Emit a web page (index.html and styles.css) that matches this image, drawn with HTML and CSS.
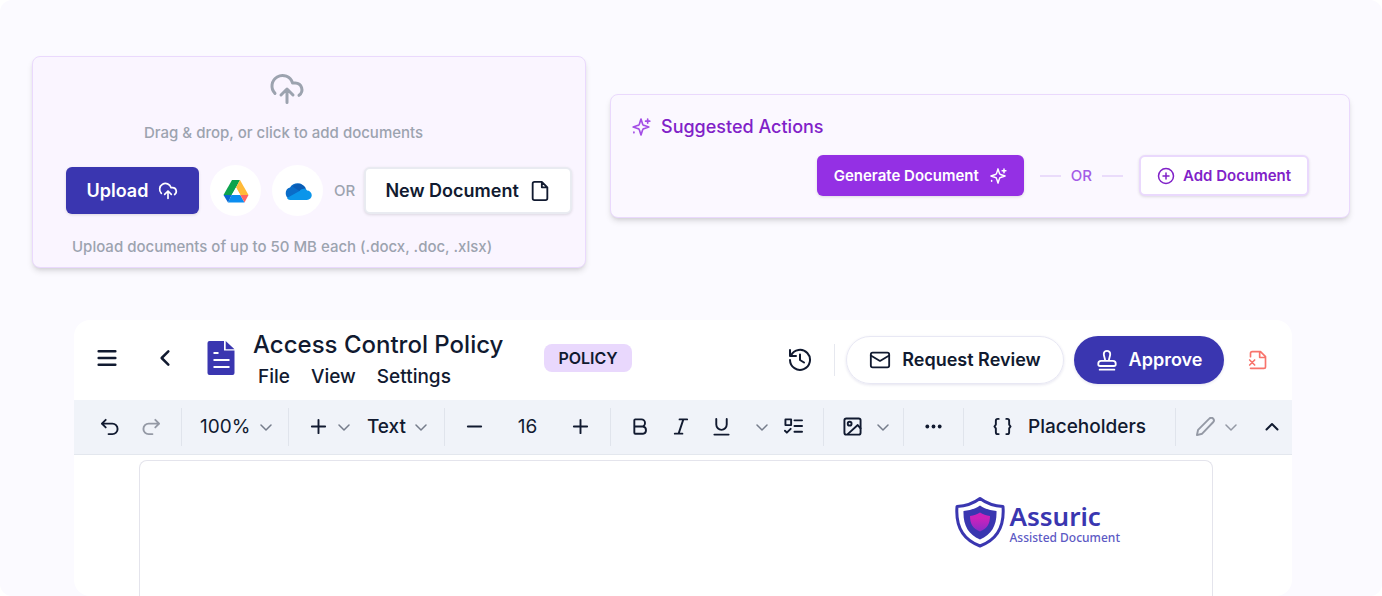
FILE: index.html
```html
<!DOCTYPE html>
<html lang="en">
<head>
  <meta charset="UTF-8" />
  <meta name="viewport" content="width=device-width, initial-scale=1.0"/>
  <title>Access Control Policy</title>
  <link rel="stylesheet" href="styles.css">
</head>
<body>
  <main class="page">
    <div class="cards">
      <section class="card upload-card">
        <svg class="icon drop-icon" viewBox="0 0 24 24"><path d="M4 14.9A7 7 0 1 1 15.7 8h1.8a4.5 4.5 0 0 1 2.5 8.2M12 12v9M8 16l4-4 4 4"/></svg>
        <p class="drop-text">Drag &amp; drop, or click to add documents</p>
        <div class="upload-row">
          <button class="btn btn-upload">Upload
            <svg class="icon" viewBox="0 0 24 24"><path d="M4 14.9A7 7 0 1 1 15.7 8h1.8a4.5 4.5 0 0 1 2.5 8.2M12 12v9M8 16l4-4 4 4"/></svg>
          </button>
          <button class="round drive" aria-label="Google Drive">
            <svg viewBox="0 0 26 24">
              <path fill="#0da34e" d="M9 1h8l-4 7.500L8.700 16H0.500z"/>
              <path fill="#ffba38" d="M17 1l8.500 15h-8.200L13 8.500z"/>
              <path fill="#fff" d="M13 8.500l-4.300 7.500h8.600z"/>
              <path fill="#0b8df0" d="M8.700 16h8.600l4.200 7.500H5z"/>
              <path fill="#0a66d0" d="M0.500 16h8.200L5 23.500z"/>
              <path fill="#ff6464" d="M17.300 16h8.200l-4 7.500z"/>
            </svg>
          </button>
          <button class="round" aria-label="OneDrive">
            <svg viewBox="0 0 28 24">
              <path fill="#0a6cc8" d="M6 20a6 6 0 0 1 0-11.500A9 9 0 0 1 21.500 9L25 18z"/>
              <path fill="#0a5cb5" d="M8.500 7.600A8 8 0 0 1 21.500 9l-6 3z"/>
              <path fill="#0a95ea" d="M3 19l12.500-7c2-2.500 6-3 7.500-.500A4.600 4.600 0 0 1 23 21H6c-1 0-2.500-1-3-2z"/>
            </svg>
          </button>
          <span class="or">OR</span>
          <button class="btn btn-new">New Document
            <svg class="icon" viewBox="0 0 24 24"><path d="M14 2H6a2 2 0 0 0-2 2v16a2 2 0 0 0 2 2h12a2 2 0 0 0 2-2V8zM14 2v6h6"/></svg>
          </button>
        </div>
        <p class="limits">Upload documents of up to 50 MB each (.docx, .doc, .xlsx)</p>
      </section>

      <section class="card actions-card">
        <h2 class="actions-title">
          <svg class="icon sparkle" viewBox="0 0 24 24"><path d="M12 2.500l1.900 6a2 2 0 0 0 1.500 1.500l6 2-6 2a2 2 0 0 0-1.500 1.500l-1.900 6-1.900-6A2 2 0 0 0 8.600 14l-6-2 6-2a2 2 0 0 0 1.500-1.500zM20 2.500v5M17.500 5h5M3.500 18v1"/></svg>
          Suggested Actions
        </h2>
        <div class="actions-row">
          <button class="btn btn-generate">Generate Document
            <svg class="icon sparkle" viewBox="0 0 24 24"><path d="M12 2.500l1.900 6a2 2 0 0 0 1.500 1.500l6 2-6 2a2 2 0 0 0-1.500 1.500l-1.900 6-1.900-6A2 2 0 0 0 8.600 14l-6-2 6-2a2 2 0 0 0 1.500-1.500zM20 2.500v5M17.500 5h5M3.500 18v1"/></svg>
          </button>
          <span class="divider-or">OR</span>
          <button class="btn btn-add">
            <svg class="icon" viewBox="0 0 24 24"><circle cx="12" cy="12" r="10"/><path d="M8 12h8M12 8v8"/></svg>
            Add Document
          </button>
        </div>
      </section>
    </div>

    <section class="editor">
      <header class="editor-header">
        <button class="tool menu" aria-label="Menu"><svg class="icon" viewBox="0 0 24 24"><path d="M2 4h20M2 12h20M2 20h20"/></svg></button>
        <button class="tool back" aria-label="Back"><svg class="icon" viewBox="0 0 24 24"><path d="M16 4l-8 8 8 8"/></svg></button>
        <svg class="doc-icon" viewBox="0 0 28 34">
          <path fill="#3a36b0" d="M2.500 0H17v9.500h10.500V32a2 2 0 0 1-2 2h-23a2 2 0 0 1-2-2V2a2 2 0 0 1 2-2zM18.700 0l8.800 8.300h-8.800z"/>
          <path stroke="#fff" stroke-width="2" d="M6.500 12h5M6.500 19h16M6.500 26h16"/>
        </svg>
        <div class="doc-info">
          <h1>Access Control Policy</h1>
          <nav class="doc-menu">
            <button>File</button>
            <button>View</button>
            <button>Settings</button>
          </nav>
        </div>
        <span class="badge">POLICY</span>
        <div class="header-actions">
          <button class="tool history" aria-label="Version history"><svg class="icon" viewBox="0 0 24 24"><path d="M3 7.500A10 10 0 1 1 2 12M2 2v6h6M12 6.500V12l4 2.500"/></svg></button>
          <span class="header-sep"></span>
          <button class="pill pill-light">
            <svg class="icon" viewBox="0 0 24 24"><rect x="2" y="4" width="20" height="16" rx="2"/><path d="M2 7l10 6 10-6"/></svg>
            Request Review
          </button>
          <button class="pill pill-dark">
            <svg class="icon" viewBox="0 0 24 24"><path d="M4 22.500h16M4.500 18.500h15a2 2 0 0 0 2-2V16a3 3 0 0 0-3-3h-13a3 3 0 0 0-3 3v.5a2 2 0 0 0 2 2zM10 13c0-3-1.500-5-1.500-7.500a3.500 3.500 0 0 1 7 0C15.500 8 14 10 14 13"/></svg>
            Approve
          </button>
          <button class="tool discard" aria-label="Discard document"><svg class="icon" viewBox="0 0 24 24"><path d="M3 8V4a2 2 0 0 1 2-2h10l6 6v12a2 2 0 0 1-2 2H3M14 2v7h7M2 12l6 6M8 12l-6 6"/></svg></button>
        </div>
      </header>

      <div class="toolbar">
        <div class="group undo-group">
          <button class="tool" aria-label="Undo"><svg class="icon" viewBox="0 0 20 20"><path d="M6 3L2 7l4 4M2 7h11a5 5 0 0 1 0 11H9"/></svg></button>
          <button class="tool muted" aria-label="Redo"><svg class="icon" viewBox="0 0 20 20"><path d="M14 3l4 4-4 4M18 7H7a5 5 0 0 0 0 11h4"/></svg></button>
        </div>
        <div class="group zoom-group">
          <button class="tool label">100%<svg class="chev" viewBox="0 0 12 12"><path d="M1 4l5 5 5-5"/></svg></button>
        </div>
        <div class="group insert-group">
          <button class="tool label" aria-label="Insert"><svg class="icon" viewBox="0 0 20 20"><path d="M3 10h14M10 3v14"/></svg><svg class="chev" viewBox="0 0 12 12"><path d="M1 4l5 5 5-5"/></svg></button>
          <button class="tool label text">Text<svg class="chev" viewBox="0 0 12 12"><path d="M1 4l5 5 5-5"/></svg></button>
        </div>
        <div class="group size-group">
          <button class="tool" aria-label="Decrease font size"><svg class="icon" viewBox="0 0 20 20"><path d="M3 10h14"/></svg></button>
          <span>16</span>
          <button class="tool" aria-label="Increase font size"><svg class="icon" viewBox="0 0 20 20"><path d="M3 10h14M10 3v14"/></svg></button>
        </div>
        <div class="group format-group">
          <button class="tool" aria-label="Bold"><svg class="icon" viewBox="0 0 20 20"><path d="M3.500 10H12M3.500 3.500a1 1 0 0 1 1-1H11a3.700 3.700 0 0 1 0 7.500h1.500a3.900 3.900 0 0 1 0 7.700h-8a1 1 0 0 1-1-1z"/></svg></button>
          <button class="tool" aria-label="Italic"><svg class="icon" viewBox="0 0 20 20"><path d="M9 2.500h8M4 17.500h8M13 2.500l-5 15"/></svg></button>
          <button class="tool" aria-label="Underline"><svg class="icon" viewBox="0 0 20 20"><path d="M4.500 2v6a5.500 5.500 0 0 0 11 0V2M2.500 18.500h15"/></svg></button>
          <button class="tool underline-more" aria-label="More formatting"><svg class="chev" viewBox="0 0 12 12"><path d="M1 4l5 5 5-5"/></svg></button>
          <button class="tool" aria-label="Checklist"><svg class="icon" viewBox="0 0 20 20"><path d="M1.500 2.500h6v6h-6zM1 14.500l2 2 4-4M11 3.500h8M11 9.500h8M11 15.500h8"/></svg></button>
        </div>
        <div class="group image-group">
          <button class="tool label" aria-label="Insert image"><svg class="icon" viewBox="0 0 20 20"><rect x="1.500" y="1.500" width="17" height="17" rx="2"/><circle cx="7" cy="7" r="2"/><path d="M18.500 12l-3-3.500L5 18"/></svg><svg class="chev" viewBox="0 0 12 12"><path d="M1 4l5 5 5-5"/></svg></button>
        </div>
        <div class="group more-group">
          <button class="tool" aria-label="More"><svg class="icon dots" viewBox="0 0 20 20"><circle cx="3.500" cy="10" r="2"/><circle cx="10" cy="10" r="2"/><circle cx="16.500" cy="10" r="2"/></svg></button>
        </div>
        <div class="group placeholder-group">
          <button class="tool placeholders"><svg class="icon" viewBox="0 0 20 20"><path d="M6 2H5a2 2 0 0 0-2 2v4l-1.500 2L3 12v4a2 2 0 0 0 2 2h1M14 2h1a2 2 0 0 1 2 2v4l1.500 2-1.500 2v4a2 2 0 0 1-2 2h-1"/></svg>Placeholders</button>
        </div>
        <div class="group edit-group">
          <button class="tool label muted" aria-label="Editing mode"><svg class="icon" viewBox="0 0 20 20"><path d="M1 19l1.200-5.500L14 1.700a2.300 2.300 0 0 1 4 3.800L6.500 17.600z"/></svg><svg class="chev" viewBox="0 0 12 12"><path d="M1 4l5 5 5-5"/></svg></button>
          <button class="tool" aria-label="Collapse toolbar"><svg class="collapse" viewBox="0 0 14 14"><path d="M1.500 9.500L7 4l5.500 5.500"/></svg></button>
        </div>
      </div>

      <div class="canvas">
        <article class="sheet">
          <div class="logo">
            <svg viewBox="0 0 52 52">
              <defs>
                <linearGradient id="core" x1="0" y1="0" x2="0" y2="1">
                  <stop offset="0.300" stop-color="#cc22bb"/>
                  <stop offset="1" stop-color="#8a2cc8"/>
                </linearGradient>
              </defs>
              <path fill="#fff" stroke="#3a36b0" stroke-width="3" stroke-linejoin="round" d="M26 2.500C20 7 12 10 3 10.500c-1.500 19 5 33 23 39.500 18-6.500 24.500-20.500 23-39.500C40 10 32 7 26 2.500z"/>
              <path fill="#3a36b0" d="M26 9.500c-4.500 3-10 5-16.500 5.500C9 29 14 38.500 26 43.500 38 38.500 43 29 42.500 15 36 14.500 30.500 12.500 26 9.500z"/>
              <path fill="url(#core)" d="M26 16.500c-3 2-6 3-10 3.500 0 8 3 12.500 10 15.500 7-3 10-7.500 10-15.500-4-.5-7-1.500-10-3.500z"/>
            </svg>
            <div class="logo-text">
              <div class="logo-name">Assuric</div>
              <div class="logo-sub">Assisted Document</div>
            </div>
          </div>
        </article>
      </div>
    </section>
  </main>
</body>
</html>
```
FILE: styles.css
```css
* {
  box-sizing: border-box;
}
body {
  font-family: Inter, sans-serif;
  background: #fff;
  color: #111a30;
  margin: 0;
}
h1, h2, p {
  margin: 0;
}
button {
  font: inherit;
  color: inherit;
  margin: 0;
  padding: 0;
  border: none;
  background: none;
  cursor: pointer;
}
svg {
  display: block;
  flex: none;
}
.icon, .chev, .collapse {
  fill: none;
  stroke: currentColor;
  stroke-width: 2;
  stroke-linecap: round;
  stroke-linejoin: round;
}
.page {
  display: flex;
  flex-direction: column;
  min-height: 100vh;
  padding: 56px 32px 0;
  background: #fbfaff;
  border-radius: 12px;
}

/* top cards */
.cards {
  display: flex;
  align-items: flex-start;
  gap: 24px;
}
.card {
  border: 1px solid #ead9fd;
  border-radius: 8px;
  background: #faf5ff;
  box-shadow: 0 4px 6px -1px rgba(0,0,0,0.13), 0 2px 4px -2px rgba(0,0,0,0.1);
}
.upload-card {
  display: flex;
  flex-direction: column;
  width: 554px;
  padding: 14px 13px 8px 33px;
  color: #9ca3af;
  font-size: 15px;
  font-weight: 500;
  line-height: 24px;
}
.drop-icon {
  width: 36px;
  height: 36px;
  margin: 0 0 14px 203px;
}
.drop-text {
  padding-left: 78px;
}
.upload-row {
  display: flex;
  align-items: center;
  gap: 11px;
  margin: 20px 0 19px;
}
.btn {
  display: flex;
  align-items: center;
  justify-content: center;
  border-radius: 6px;
  font-weight: 600;
  white-space: nowrap;
  box-shadow: 0 1px 3px rgba(0,0,0,0.12);
}
.btn-upload {
  width: 133px;
  height: 47px;
  gap: 10px;
  background: #3a36b0;
  color: #fff;
  font-size: 18px;
}
.btn-upload .icon {
  width: 20px;
  height: 20px;
}
.round {
  display: flex;
  align-items: center;
  justify-content: center;
  width: 51px;
  height: 51px;
  border-radius: 50%;
  background: #fff;
}
.round svg {
  width: 28px;
  height: 24px;
}
.or {
  margin-right: -2px;
}
.btn-new {
  flex: 1;
  height: 47px;
  gap: 10px;
  border: 2px solid #e9ebf1;
  background: #fff;
  color: #111a30;
  font-size: 18px;
}
.btn-new .icon {
  width: 22px;
  height: 22px;
}
.limits {
  padding-left: 6px;
}
.actions-card {
  flex: 1;
  margin-top: 38px;
  padding: 20px 40px 21px 20px;
  background: #fbf8ff;
  color: #8021c8;
}
.actions-title {
  display: flex;
  align-items: center;
  gap: 10px;
  font-size: 18px;
  font-weight: 500;
  line-height: 24px;
}
.sparkle {
  width: 20px;
  height: 20px;
}
.actions-title .sparkle {
  color: #a44ee6;
}
.actions-row {
  display: flex;
  align-items: center;
  justify-content: flex-end;
  gap: 16px;
  margin-top: 16px;
}
.actions-row .btn {
  height: 41px;
  gap: 10px;
  font-size: 15px;
}
.btn-generate {
  padding: 0 17px;
  background: #9430e4;
  color: #fff;
}
.btn-generate .sparkle {
  width: 18px;
  height: 18px;
}
.divider-or {
  display: flex;
  align-items: center;
  gap: 10px;
  color: #a45ce6;
  font-size: 15px;
  font-weight: 500;
}
.divider-or::before, .divider-or::after {
  content: "";
  width: 21px;
  height: 2px;
  background: #eadcfb;
}
.actions-row .btn-add {
  gap: 8px;
  padding: 0 16px;
  border: 2px solid #ead9fd;
  background: #fff;
}
.btn-add .icon {
  width: 18px;
  height: 18px;
}

/* editor */
.editor {
  display: flex;
  flex: 1;
  flex-direction: column;
  margin: 52px 58px 0 42px;
  border-radius: 16px;
  background: #fff;
}
.editor-header {
  display: flex;
  align-items: center;
  height: 80px;
  padding: 0 24px 0 22px;
}
.tool {
  display: flex;
  align-items: center;
  justify-content: center;
}
.tool .icon {
  width: 20px;
  height: 20px;
}
.menu, .back, .doc-icon, .badge {
  margin-bottom: 4px;
}
.menu .icon {
  width: 22px;
  stroke-width: 3;
}
.back {
  margin-left: 37px;
  margin-right: 32px;
}
.back .icon {
  stroke-width: 3;
}
.doc-icon {
  width: 28px;
  height: 34px;
}
.doc-info {
  margin-left: 18px;
  padding-top: 2px;
}
.doc-info h1 {
  font-size: 24px;
  font-weight: 500;
  line-height: 32px;
  white-space: nowrap;
}
.doc-menu {
  display: flex;
  gap: 21px;
  padding-left: 5px;
  font-size: 19px;
  font-weight: 500;
  line-height: 32px;
}
.badge {
  margin-left: 41px;
  padding: 0 14px;
  border-radius: 8px;
  background: #e9d8fd;
  font-size: 16px;
  font-weight: 600;
  line-height: 28px;
}
.header-actions {
  display: flex;
  align-items: center;
  margin-left: auto;
}
.history .icon {
  width: 24px;
  height: 24px;
}
.header-sep {
  width: 1px;
  height: 32px;
  margin: 0 11px 0 22px;
  background: #e6e8ef;
}
.pill {
  display: flex;
  align-items: center;
  justify-content: center;
  gap: 11px;
  height: 48px;
  padding-bottom: 1px;
  border-radius: 24px;
  font-size: 18px;
  font-weight: 600;
  white-space: nowrap;
  box-shadow: 0 1px 3px rgba(40,36,120,0.12);
}
.pill .icon {
  width: 22px;
  height: 22px;
}
.pill-light {
  width: 218px;
  margin-right: 10px;
  border: 1px solid #e8e8f4;
}
.pill-dark {
  width: 150px;
  background: #3a36b0;
  color: #fff;
}
.discard {
  margin-left: 24px;
  color: #f8746c;
}

/* toolbar */
.toolbar {
  display: flex;
  align-items: center;
  height: 55px;
  padding-bottom: 1px;
  border-bottom: 1px solid #e3e7ee;
  background: #f0f3f9;
  font-size: 19px;
  font-weight: 500;
}
.group {
  display: flex;
  align-items: center;
  justify-content: space-between;
  height: 38px;
  border-right: 1px solid #e0e4ec;
}
.group:last-child {
  border-right: none;
}
.label {
  gap: 10px;
}
.toolbar .icon {
  width: 19px;
  height: 19px;
}
.chev {
  width: 12px;
  height: 12px;
  color: #767d8c;
}
.toolbar .chev {
  stroke-width: 1.5;
}
.muted, .muted .chev {
  color: #9499a5;
}
.undo-group {
  width: 108px;
  padding: 0 20px 0 26px;
}
.zoom-group {
  width: 107px;
  padding: 0 18px;
  font-weight: 400;
}
.insert-group {
  width: 156px;
  padding: 0 17px 0 20px;
}
.text {
  gap: 9px;
}
.size-group {
  width: 166px;
  padding: 0 20px;
  font-weight: 400;
}
.format-group {
  width: 213px;
  padding: 0 20px;
}
.underline-more {
  margin-left: 4px;
  margin-right: -5px;
}
.image-group {
  width: 80px;
  padding: 0 13px 0 19px;
}
.image-group .label {
  gap: 15px;
}
.more-group {
  width: 60px;
  padding: 0 20px;
}
.dots circle {
  fill: currentColor;
  stroke: none;
}
.placeholder-group {
  flex: 1;
  justify-content: center;
}
.placeholders {
  gap: 16px;
}
.edit-group {
  width: 116px;
  padding: 0 13px 0 20px;
}
.collapse {
  width: 14px;
  height: 14px;
}

/* document */
.canvas {
  display: flex;
  flex: 1;
  padding: 5px 79px 0 65px;
}
.sheet {
  display: flex;
  flex: 1;
  align-items: flex-start;
  justify-content: flex-end;
  padding: 35px 92px 0 0;
  border: 1px solid #e4e4ec;
  border-bottom: none;
  border-radius: 8px 8px 0 0;
}
.logo {
  display: flex;
  align-items: center;
  gap: 3px;
  color: #3a36b0;
  font-family: "Noto Sans", sans-serif;
}
.logo svg {
  width: 52px;
  height: 52px;
}
.logo-text {
  padding-top: 4px;
}
.logo-name {
  font-size: 26px;
  font-weight: 600;
  line-height: 28px;
}
.logo-sub {
  color: #5c59c4;
  font-size: 12px;
  font-weight: 500;
  line-height: 16px;
}
```
